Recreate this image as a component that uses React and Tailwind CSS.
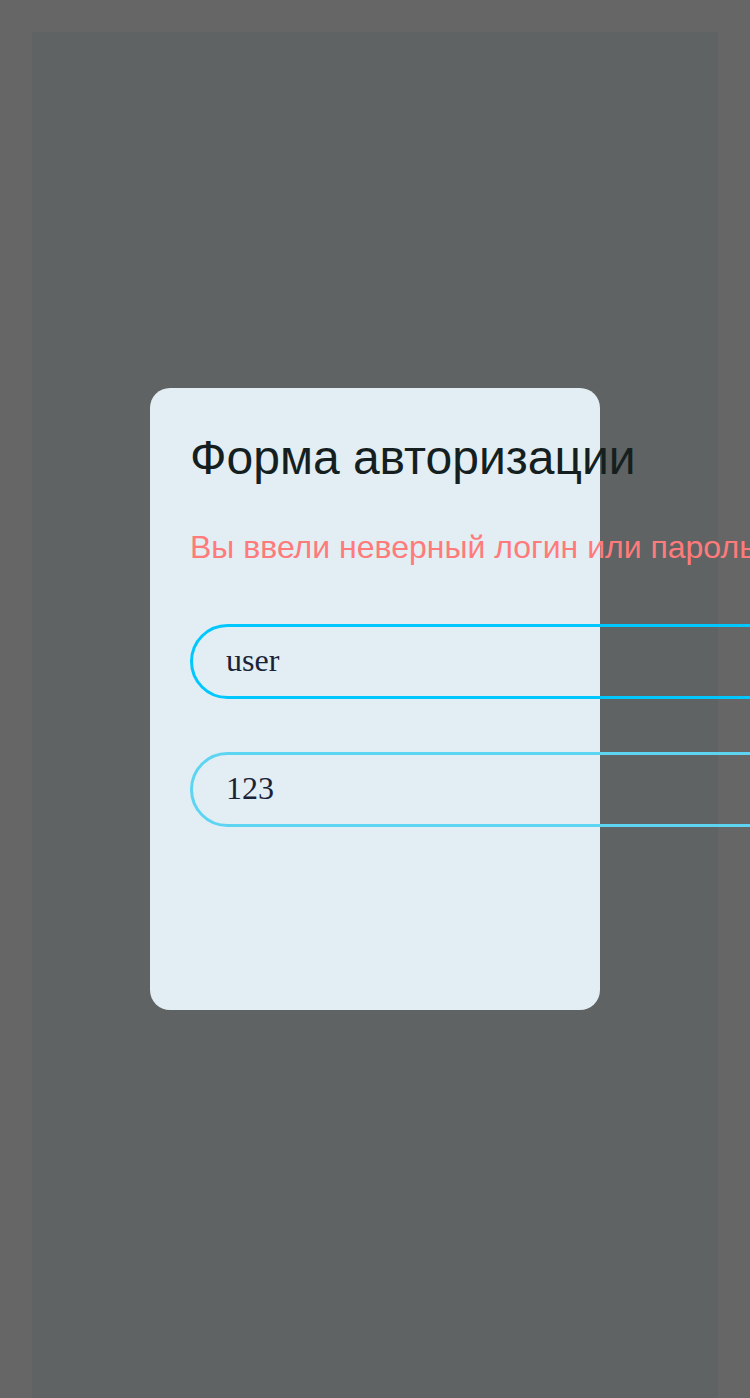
import { useState } from "react";

const App = () => {
  const [login, setLogin] = useState("user");
  const [password, setPassword] = useState("123");

  return (
    <div className="h-screen w-full overflow-hidden bg-[#666666] px-8 pt-8">
      <div className="h-full w-full bg-[#5f6363] pt-[356px]">
        {/* Auth card */}
        <div className="mx-auto h-[622px] w-[450px] rounded-[20px] bg-[#e2eef3] px-10 pt-[46px]">
          <h1 className="whitespace-nowrap font-['Liberation_Sans',Arial,sans-serif] text-[48px] leading-none text-[#151f1f]">
            Форма авторизации
          </h1>
          <p className="mt-[49px] whitespace-nowrap font-['Liberation_Sans',Arial,sans-serif] text-[32px] leading-none text-[#ff7b7b]">
            Вы ввели неверный логин или пароль
          </p>
          <div className="mt-[61px] flex flex-col gap-[53px]">
            <input
              type="text"
              value={login}
              onChange={(e) => setLogin(e.target.value)}
              className="h-[75px] w-[620px] shrink-0 rounded-full border-[3px] border-[#00c8ff] bg-transparent pb-[3px] pl-[33px] font-['Liberation_Serif','Times_New_Roman',serif] text-[32px] text-[#1a2238] outline-none"
            />
            <input
              type="text"
              value={password}
              onChange={(e) => setPassword(e.target.value)}
              className="h-[75px] w-[620px] shrink-0 rounded-full border-[3px] border-[#5dd5f2] bg-transparent pb-[3px] pl-[33px] font-['Liberation_Serif','Times_New_Roman',serif] text-[32px] text-[#1a2238] outline-none"
            />
          </div>
        </div>
      </div>
    </div>
  );
};

export default App;
